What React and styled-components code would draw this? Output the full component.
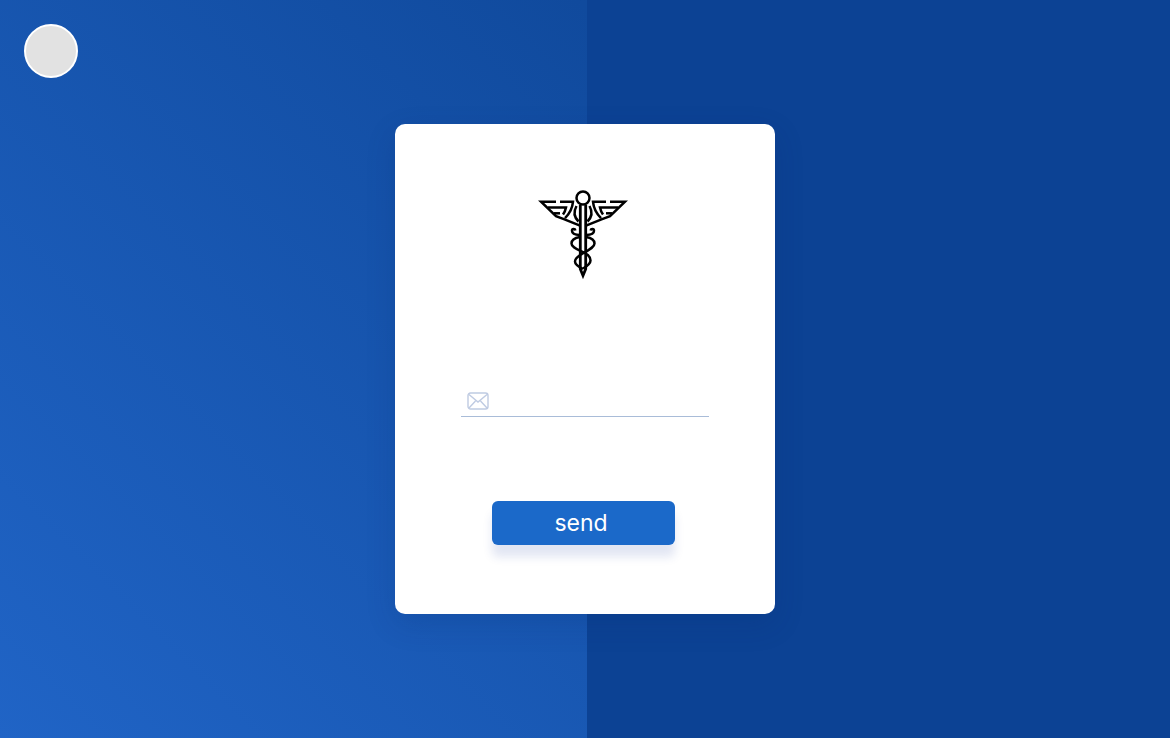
import React from "react";
import styled, { createGlobalStyle } from "styled-components";

const GlobalStyle = createGlobalStyle`
  html, body {
    margin: 0;
    padding: 0;
    height: 100%;
  }
  body {
    font-family: "Inter", "Liberation Sans", sans-serif;
  }
`;

const Page = styled.div`
  position: relative;
  height: 738px;
  overflow: hidden;
  display: flex;
  align-items: center;
  justify-content: center;
  background: linear-gradient(45deg, #2064c6 0%, #104a9d 69%, #0b4295 100%);
  &::after {
    content: "";
    position: absolute;
    top: 0;
    right: 0;
    bottom: 0;
    width: 583px;
    background: #0c4294;
  }
`;

const Avatar = styled.div`
  position: absolute;
  top: 24px;
  left: 24px;
  z-index: 2;
  width: 50px;
  height: 50px;
  border: 2px solid #fff;
  border-radius: 50%;
  background: #e2e2e2;
`;

const Card = styled.div`
  position: relative;
  z-index: 1;
  box-sizing: border-box;
  width: 380px;
  height: 490px;
  padding-top: 66px;
  display: flex;
  flex-direction: column;
  align-items: center;
  background: #fff;
  border-radius: 10px;
  box-shadow: 0 10px 30px rgba(8, 40, 100, 0.16);
`;

const Logo = styled.svg`
  display: block;
  width: 90px;
  height: 90px;
  margin-left: -4px;
`;

const Field = styled.label`
  box-sizing: border-box;
  width: 248px;
  height: 36px;
  margin-top: 101px;
  padding-left: 6px;
  display: flex;
  align-items: center;
  border-bottom: 1px solid #a9bcd8;
`;

const MailIcon = styled.svg`
  display: block;
  width: 22px;
  height: 18px;
  margin-top: 5px;
`;

const Input = styled.input`
  flex: 1;
  min-width: 0;
  height: 100%;
  border: 0;
  outline: 0;
  background: transparent;
`;

const SendButton = styled.button`
  width: 183px;
  height: 44px;
  margin-top: 84px;
  margin-left: -4px;
  border: 0;
  border-radius: 6px;
  background: #1b69c9;
  color: #fff;
  font-family: "Inter", "Liberation Sans", sans-serif;
  font-size: 23px;
  font-weight: 400;
  padding: 0 4px 1px 0;
  box-shadow: 0 12px 10px 0 rgba(30, 60, 160, 0.13);
`;

const Caduceus = () => (
  <Logo viewBox="0 0 90 90" fill="none" stroke="#000" strokeWidth="2.5" strokeLinejoin="miter" strokeLinecap="butt">
    <circle cx="45" cy="8" r="6.500" />
    <path d="M42.300 15v64l2.700 6.500 2.700-6.500V15" strokeWidth="2.800" />
    {/* left wing */}
    <path d="M18 11.700H3l15 14.500 8.500 3.200 15.500 6.300" />
    <path d="M22 11.700h13c-.5 6-3 11.500-8 16.500" />
    <path d="M10 17.500h18c-.5 2.600-1.500 4.800-3 7" />
    <path d="M16 23.300h6" />
    <path d="M38.500 16c-2.500 4.500-3 10.500 2 15.500" />
    {/* right wing */}
    <path d="M72 11.700h15L72 26.200l-8.500 3.200L48 35.700" />
    <path d="M68 11.700H55c.5 6 3 11.500 8 16.500" />
    <path d="M80 17.500H62c.5 2.600 1.500 4.800 3 7" />
    <path d="M74 23.300h-6" />
    <path d="M51.500 16c2.500 4.500 3 10.500-2 15.500" />
    {/* top curls of the snakes */}
    <path d="M42 45c-4.500 0-8-1.500-8-4.200 0-2.300 3-2.300 3.400-.3" />
    <path d="M48 45c4.500 0 8-1.500 8-4.200 0-2.300-3-2.300-3.400-.3" />
    {/* snake bodies */}
    <path d="M42 47c-5 .8-8.500 3.300-8.500 6.500 0 4 6.500 6 12.500 9 4.500 2.200 6.500 5 6.500 8 0 3.500-4 6-7.500 8" />
    <path d="M48 47c5 .8 8.500 3.300 8.500 6.500 0 4-7 7-13.500 11-4 2.500-6 4.500-6 7 0 3 4 5.500 8 7.500" />
  </Logo>
);

const App = () => (
  <>
    <GlobalStyle />
    <Page>
      <Avatar />
      <Card>
        <Caduceus />
        <Field>
          <MailIcon viewBox="0 0 22 18" fill="none" stroke="#bfcbe2" strokeWidth="1.4">
            <rect x="1" y="1" width="20" height="16" rx="2.500" />
            <path d="M2 2.500l9 7.500 9-7.500M2 16l6.500-7M20 16l-6.500-7" />
          </MailIcon>
          <Input type="email" />
        </Field>
        <SendButton>send</SendButton>
      </Card>
    </Page>
  </>
);

export default App;
